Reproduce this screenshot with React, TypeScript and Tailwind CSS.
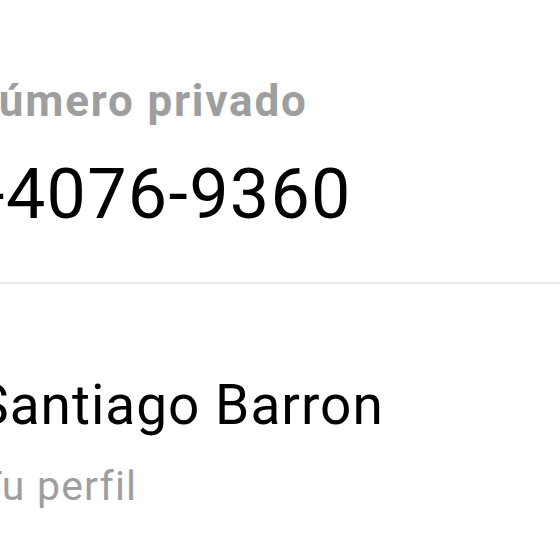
export default function App() {
  return (
    <div className="w-[560px] h-[560px] overflow-hidden bg-white font-['Roboto',sans-serif]">
      <div className="pt-[79px]">
        <p className="-ml-[34px] whitespace-nowrap text-[44px] font-bold leading-none tracking-[1.8px] text-[#9e9e9e]">
          Número privado
        </p>
        <p className="-ml-[96px] mt-[36px] whitespace-nowrap text-[70px] leading-none tracking-[1.3px] text-black">
          55-4076-9360
        </p>
      </div>
      <div className="mt-[53px] h-[2px] bg-[#e8e8e8]" />
      <div className="pt-[94px]">
        <p className="-ml-[24px] whitespace-nowrap text-[55px] leading-none tracking-[1px] text-black">
          Santiago Barron
        </p>
        <p className="-ml-[22px] mt-[33px] whitespace-nowrap text-[41px] leading-none tracking-[1.2px] text-[#9e9e9e]">
          Tu perfil
        </p>
      </div>
    </div>
  );
}
